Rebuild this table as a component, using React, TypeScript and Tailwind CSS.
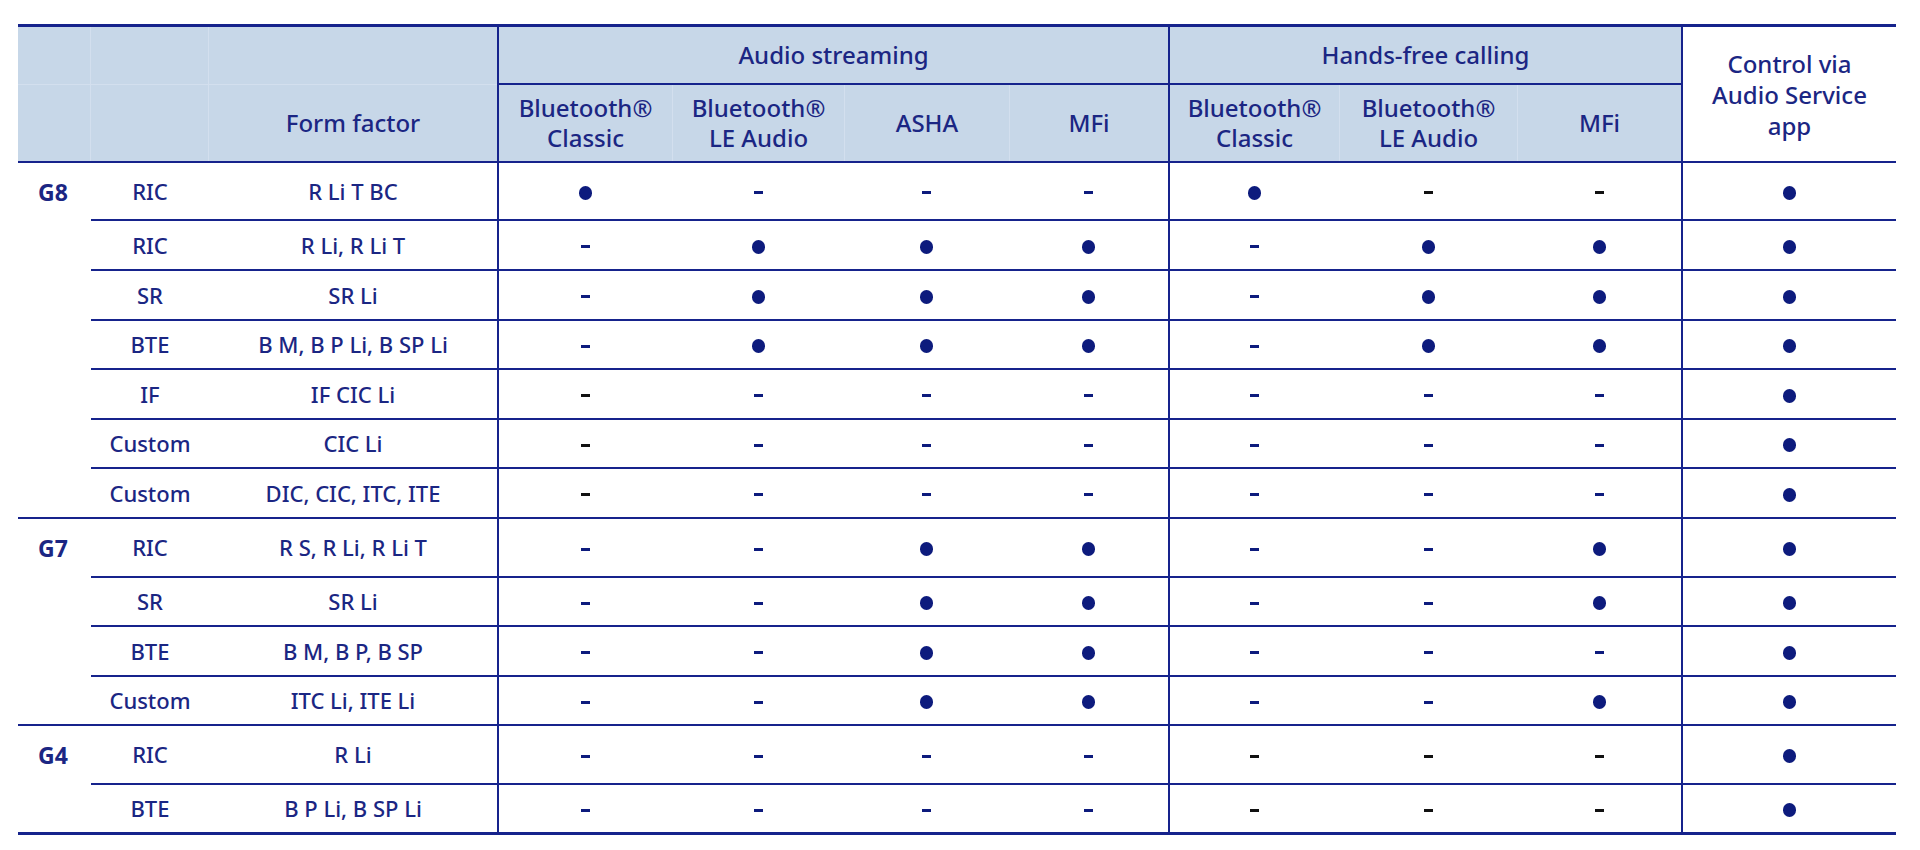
import React from "react";

type Mark = "dot" | "dash" | "kdash";

type Row = {
  group?: string;
  type: string;
  form: string;
  marks: Mark[];
  h: string;
  last?: boolean;
};

const D: Mark = "dot";
const N: Mark = "dash";
const K: Mark = "kdash";

const rows: Row[] = [
  { group: "G8", type: "RIC", form: "R Li T BC", marks: [D, N, N, N, D, K, K, D], h: "h-[58px]" },
  { type: "RIC", form: "R Li, R Li T", marks: [N, D, D, D, N, D, D, D], h: "h-[50px]" },
  { type: "SR", form: "SR Li", marks: [N, D, D, D, N, D, D, D], h: "h-[50px]" },
  { type: "BTE", form: "B M, B P Li, B SP Li", marks: [N, D, D, D, N, D, D, D], h: "h-[49px]" },
  { type: "IF", form: "IF CIC Li", marks: [K, N, N, N, N, N, N, D], h: "h-[50px]" },
  { type: "Custom", form: "CIC Li", marks: [K, N, N, N, N, N, N, D], h: "h-[49px]" },
  { type: "Custom", form: "DIC, CIC, ITC, ITE", marks: [K, N, N, N, N, N, N, D], h: "h-[50px]", last: true },
  { group: "G7", type: "RIC", form: "R S, R Li, R Li T", marks: [N, N, D, D, N, N, D, D], h: "h-[59px]" },
  { type: "SR", form: "SR Li", marks: [N, N, D, D, N, N, D, D], h: "h-[49px]" },
  { type: "BTE", form: "B M, B P, B SP", marks: [N, N, D, D, N, N, N, D], h: "h-[50px]" },
  { type: "Custom", form: "ITC Li, ITE Li", marks: [N, N, D, D, N, N, D, D], h: "h-[49px]", last: true },
  { group: "G4", type: "RIC", form: "R Li", marks: [N, N, N, N, K, K, K, D], h: "h-[59px]" },
  { type: "BTE", form: "B P Li, B SP Li", marks: [N, N, N, N, K, K, K, D], h: "h-[50px]", last: true },
];

const cols =
  "grid grid-cols-[73px_118px_288px_175px_172px_165px_159px_171px_178px_164px_215px]";

function Cell({ mark }: { mark: Mark }) {
  if (mark === "dot") return <span className="mt-[3px] block h-[14px] w-[13px] rounded-full bg-[#0d1b7d]" />;
  return (
    <span
      className={`mt-[3px] block h-[3px] w-[9px] ${mark === "kdash" ? "bg-[#111111]" : "bg-[#0d1b7d]"}`}
    />
  );
}

export default function App() {
  return (
    <div className="min-h-[850px] bg-white pt-[24px] pl-[18px] font-['Noto_Sans',sans-serif] font-medium text-[#1b2683]">
      <div className="w-[1878px] border-t-[3px] border-[#16238c]">
        {/* Header */}
        <div className={`${cols} grid-rows-[58px_76px] border-b-2 border-[#16238c] text-[24px] leading-[30px]`}>
          <div className="border-b border-r border-[#d3dfee] bg-[#c7d7e8]" />
          <div className="border-b border-r border-[#d3dfee] bg-[#c7d7e8]" />
          <div className="border-b border-[#d3dfee] bg-[#c7d7e8]" />
          <div className="col-span-4 flex items-center justify-center border-b-2 border-l-2 border-[#16238c] bg-[#c7d7e8]">
            Audio streaming
          </div>
          <div className="col-span-3 flex items-center justify-center border-b-2 border-l-2 border-[#16238c] bg-[#c7d7e8]">
            Hands-free calling
          </div>
          <div className="row-span-2 flex items-center justify-center border-l-2 border-[#16238c] bg-white text-center leading-[31px]">
            Control via
            <br />
            Audio Service
            <br />
            app
          </div>

          <div className="border-r border-[#d3dfee] bg-[#c7d7e8]" />
          <div className="border-r border-[#d3dfee] bg-[#c7d7e8]" />
          <div className="flex items-center justify-center bg-[#c7d7e8]">Form factor</div>
          <div className="flex items-center justify-center border-l-2 border-[#16238c] bg-[#c7d7e8] text-center">
            Bluetooth®
            <br />
            Classic
          </div>
          <div className="flex items-center justify-center border-l border-[#d3dfee] bg-[#c7d7e8] text-center">
            Bluetooth®
            <br />
            LE Audio
          </div>
          <div className="flex items-center justify-center border-l border-[#d3dfee] bg-[#c7d7e8]">ASHA</div>
          <div className="flex items-center justify-center border-l border-[#d3dfee] bg-[#c7d7e8]">MFi</div>
          <div className="flex items-center justify-center border-l-2 border-[#16238c] bg-[#c7d7e8] text-center">
            Bluetooth®
            <br />
            Classic
          </div>
          <div className="flex items-center justify-center border-l border-[#d3dfee] bg-[#c7d7e8] text-center">
            Bluetooth®
            <br />
            LE Audio
          </div>
          <div className="flex items-center justify-center border-l border-[#d3dfee] bg-[#c7d7e8]">MFi</div>
        </div>

        {/* Body */}
        {rows.map((row, i) => {
          const line =
            i === rows.length - 1 ? "border-b-[3px] border-[#16238c]" : "border-b-2 border-[#16238c]";
          return (
            <div key={i} className={`${cols} ${row.h} text-[22px]`}>
              <div className={`flex items-center pl-[20px] text-[23px] font-bold ${row.last ? line : ""}`}>
                {row.group}
              </div>
              <div className={`flex items-center justify-center ${line}`}>{row.type}</div>
              <div className={`flex items-center justify-center ${line}`}>{row.form}</div>
              {row.marks.map((m, j) => (
                <div
                  key={j}
                  className={`flex items-center justify-center ${line} ${
                    j === 0 || j === 4 || j === 7 ? "border-l-2" : ""
                  }`}
                >
                  <Cell mark={m} />
                </div>
              ))}
            </div>
          );
        })}
      </div>
    </div>
  );
}
